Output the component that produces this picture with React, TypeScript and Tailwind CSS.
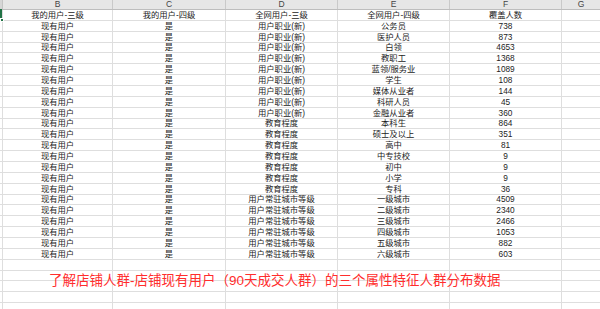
import React from "react";

const rows: [string, string, string, string, string][] = [
  ["我的用户-三级", "我的用户-四级", "全网用户-三级", "全网用户-四级", "覆盖人数"],
  ["现有用户", "是", "用户职业(新)", "公务员", "738"],
  ["现有用户", "是", "用户职业(新)", "医护人员", "873"],
  ["现有用户", "是", "用户职业(新)", "白领", "4653"],
  ["现有用户", "是", "用户职业(新)", "教职工", "1368"],
  ["现有用户", "是", "用户职业(新)", "蓝领/服务业", "1089"],
  ["现有用户", "是", "用户职业(新)", "学生", "108"],
  ["现有用户", "是", "用户职业(新)", "媒体从业者", "144"],
  ["现有用户", "是", "用户职业(新)", "科研人员", "45"],
  ["现有用户", "是", "用户职业(新)", "金融从业者", "360"],
  ["现有用户", "是", "教育程度", "本科生", "864"],
  ["现有用户", "是", "教育程度", "硕士及以上", "351"],
  ["现有用户", "是", "教育程度", "高中", "81"],
  ["现有用户", "是", "教育程度", "中专技校", "9"],
  ["现有用户", "是", "教育程度", "初中", "9"],
  ["现有用户", "是", "教育程度", "小学", "9"],
  ["现有用户", "是", "教育程度", "专科", "36"],
  ["现有用户", "是", "用户常驻城市等级", "一级城市", "4509"],
  ["现有用户", "是", "用户常驻城市等级", "二级城市", "2340"],
  ["现有用户", "是", "用户常驻城市等级", "三级城市", "2466"],
  ["现有用户", "是", "用户常驻城市等级", "四级城市", "1053"],
  ["现有用户", "是", "用户常驻城市等级", "五级城市", "882"],
  ["现有用户", "是", "用户常驻城市等级", "六级城市", "603"],
  ["", "", "", "", ""],
  ["", "", "", "", ""],
  ["", "", "", "", ""],
  ["", "", "", "", ""],
  ["", "", "", "", ""],
  ["", "", "", "", ""],
];

const widths = ["w-[110px]", "w-[113px]", "w-[112px]", "w-[112px]", "w-[112px]"];
const letters = ["B", "C", "D", "E", "F"];

export default function App() {
  return (
    <div
      className="relative w-[600px] h-[309px] overflow-hidden bg-white text-[#1c1c1c]"
      style={{ fontFamily: '"Liberation Sans", "Noto Sans CJK SC", sans-serif' }}
    >
      {/* column header */}
      <div className="flex h-[10px] bg-[#e6e6e6] border-b border-[#bdbdbd]">
        <div className="w-[3px] shrink-0 border-r border-[#c4c4c4] bg-[#d6d6d6]" />
        {letters.map((l, i) => (
          <div
            key={l}
            className={`${widths[i]} shrink-0 border-r border-[#c9c9c9] flex items-center justify-center text-[8.5px] leading-none text-[#444]`}
          >
            {l}
          </div>
        ))}
        <div className="flex-1 flex items-center justify-center text-[8.5px] leading-none text-[#444]">G</div>
      </div>

      {/* grid rows */}
      <div className="flex flex-col">
        {rows.map((r, ri) => (
          <div key={ri} className="flex h-[10.87px] shrink-0 border-b border-[#dedede]">
            <div className="w-[3px] shrink-0 border-r border-[#dedede]" />
            {r.map((c, ci) => (
              <div
                key={ci}
                className={`${widths[ci]} shrink-0 border-r border-[#dedede] flex items-center justify-center text-[8.3px] leading-none whitespace-nowrap overflow-hidden`}
              >
                {c}
              </div>
            ))}
            <div className="flex-1" />
          </div>
        ))}
      </div>

      {/* selection of A2 */}
      <div className="absolute left-0 top-[9px] w-[2px] h-[12px] bg-[#217346]" />
      <div className="absolute left-0 top-[18px] w-[4px] h-[4px] bg-[#217346] border border-white" />

      {/* red annotation text */}
      <div className="absolute left-[49px] top-[274px] text-[13.5px] leading-none whitespace-nowrap text-[#ff2d2d]">
        了解店铺人群-店铺现有用户（90天成交人群）的三个属性特征人群分布数据
      </div>
    </div>
  );
}
